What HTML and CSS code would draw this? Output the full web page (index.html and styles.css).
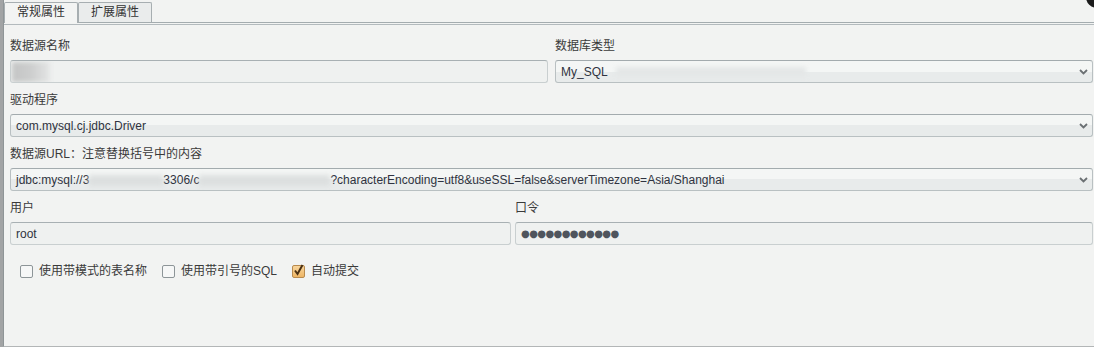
FILE: index.html
```html
<!DOCTYPE html>
<html>
<head>
    <title>数据源属性</title>
    <meta charset="utf-8">
    <link rel="stylesheet" href="styles.css">
</head>
<body>
    <div class="window">
        <div class="edge"></div>
        <div class="panel">
            <div class="tabs">
                <div class="tab active">常规属性</div>
                <div class="tab">扩展属性</div>
            </div>

            <div class="content">
                <div class="row two">
                    <div class="field">
                        <label>数据源名称</label>
                        <div class="input"><span class="smudge name"></span></div>
                    </div>
                    <div class="field">
                        <label>数据库类型</label>
                        <div class="select">
                            <span class="value">My_SQL</span>
                            <span class="smudge type"></span>
                            <svg class="chevron" width="9" height="6" viewBox="0 0 9 6"><path d="M1 1 L4.5 4.5 L8 1" fill="none" stroke="#6b7073" stroke-width="1.8"/></svg>
                        </div>
                    </div>
                </div>

                <div class="field">
                    <label>驱动程序</label>
                    <div class="select">
                        <span class="value">com.mysql.cj.jdbc.Driver</span>
                        <svg class="chevron" width="9" height="6" viewBox="0 0 9 6"><path d="M1 1 L4.5 4.5 L8 1" fill="none" stroke="#6b7073" stroke-width="1.8"/></svg>
                    </div>
                </div>

                <div class="field">
                    <label>数据源URL：注意替换括号中的内容</label>
                    <div class="select">
                        <span class="value">jdbc:mysql://3<span class="blur host"></span>3306/c<span class="blur db"></span>?characterEncoding=utf8&amp;useSSL=false&amp;serverTimezone=Asia/Shanghai</span>
                        <svg class="chevron" width="9" height="6" viewBox="0 0 9 6"><path d="M1 1 L4.5 4.5 L8 1" fill="none" stroke="#6b7073" stroke-width="1.8"/></svg>
                    </div>
                </div>

                <div class="row user">
                    <div class="field">
                        <label>用户</label>
                        <div class="input"><span class="value">root</span></div>
                    </div>
                    <div class="field">
                        <label>口令</label>
                        <div class="input"><span class="dots">●●●●●●●●●●●●</span></div>
                    </div>
                </div>

                <div class="checks">
                    <div class="check"><span class="box"></span>使用带模式的表名称</div>
                    <div class="check"><span class="box"></span>使用带引号的SQL</div>
                    <div class="check">
                        <span class="box on"><svg width="13" height="13" viewBox="0 0 13 13"><path d="M3 6.5 L5.5 10 L10.5 1" fill="none" stroke="#4a3014" stroke-width="2"/></svg></span>自动提交
                    </div>
                </div>
            </div>
        </div>
        <span class="close"></span>
    </div>
</body>
</html>
```

FILE: styles.css
```css
body {
    margin: 0;
    background: #f2f3f2;
    font-family: "Liberation Sans", "Noto Sans CJK SC", sans-serif;
    font-size: 12px;
    color: #333;
    overflow: hidden;
}

.window {
    display: flex;
    height: 347px;
    position: relative;
}

.edge {
    width: 3px;
    background: #a2a4a5;
}

.panel {
    flex: 1;
    display: flex;
    flex-direction: column;
    border-left: 1px solid #8f9597;
    border-bottom: 1px solid #b3b6b7;
    box-sizing: border-box;
}

/* onglets */
.tabs {
    display: flex;
    height: 23px;
    padding-top: 2px;
    box-sizing: border-box;
    border-bottom: 1px solid #a4acaf;
}

.tab {
    height: 20px;
    padding: 0 12px;
    line-height: 19px;
    border: 1px solid #a7aeb1;
    border-bottom: 0;
    border-radius: 2px 2px 0 0;
    background: #eaecec;
    box-sizing: border-box;
}

.tab.active {
    height: 21px;
    margin-bottom: -1px;
    background: #f3f4f3;
}

.content {
    margin-top: 1px;
    border-top: 1px solid #b3babd;
    padding: 12px 1px 0 6px;
    display: flex;
    flex-direction: column;
    gap: 8px;
}

.row {
    display: grid;
}

.row.two {
    grid-template-columns: 1fr 1fr;
    column-gap: 7px;
}

.row.user {
    grid-template-columns: 501px 1fr;
    column-gap: 4px;
}

.field label {
    display: block;
    line-height: 18px;
    margin-bottom: 5px;
    color: #3a3a3a;
}

.input,
.select {
    position: relative;
    display: flex;
    align-items: center;
    height: 23px;
    padding: 0 4px 0 5px;
    box-sizing: border-box;
    border: 1px solid #c9cfd0;
    border-top-color: #a8b0b3;
    border-radius: 3px;
    background: #eff1f0;
    color: #2f3340;
    white-space: nowrap;
    overflow: hidden;
}

.select {
    border-color: #b9c0c2;
    border-top-color: #a3abae;
    background: linear-gradient(#f4f6f5 0 50%, #e8ebeb 50%);
}

.chevron {
    margin-left: auto;
    flex: none;
}

.smudge {
    display: inline-block;
    filter: blur(2px);
}

.smudge.name {
    width: 38px;
    height: 20px;
    margin-left: -4px;
    background: linear-gradient(90deg, #c4c5c5, #cdcece 50%, #e4e5e5);
}

.smudge.type {
    width: 190px;
    height: 10px;
    margin-left: 8px;
    background: #e4e7e7;
}

.blur {
    display: inline-block;
    height: 11px;
    vertical-align: middle;
    background: #dcdfdf;
    filter: blur(2.5px);
}

.blur.host {
    width: 74px;
}

.blur.db {
    width: 131px;
}

.dots {
    font-family: "DejaVu Sans", sans-serif;
    font-size: 10px;
    letter-spacing: -0.6px;
    color: #50555d;
}

/* cases à cocher */
.checks {
    display: flex;
    align-items: center;
    gap: 15px;
    margin-top: 9px;
    padding-left: 10px;
    line-height: 18px;
    color: #3a3a3a;
}

.check {
    display: flex;
    align-items: center;
    gap: 6px;
}

.box {
    width: 13px;
    height: 13px;
    box-sizing: border-box;
    border: 1px solid #8d9598;
    border-radius: 2px;
    background: #f6f7f7;
}

.box.on {
    border-color: #b88a4e;
    background: linear-gradient(#f8d59c, #eeb565);
}

.box.on svg {
    display: block;
    margin: -2px 0 0 -1px;
    overflow: visible;
}

.close {
    position: absolute;
    top: -14px;
    right: -14px;
    width: 22px;
    height: 22px;
    border-radius: 50%;
    background: #1b1b1b;
}
```
